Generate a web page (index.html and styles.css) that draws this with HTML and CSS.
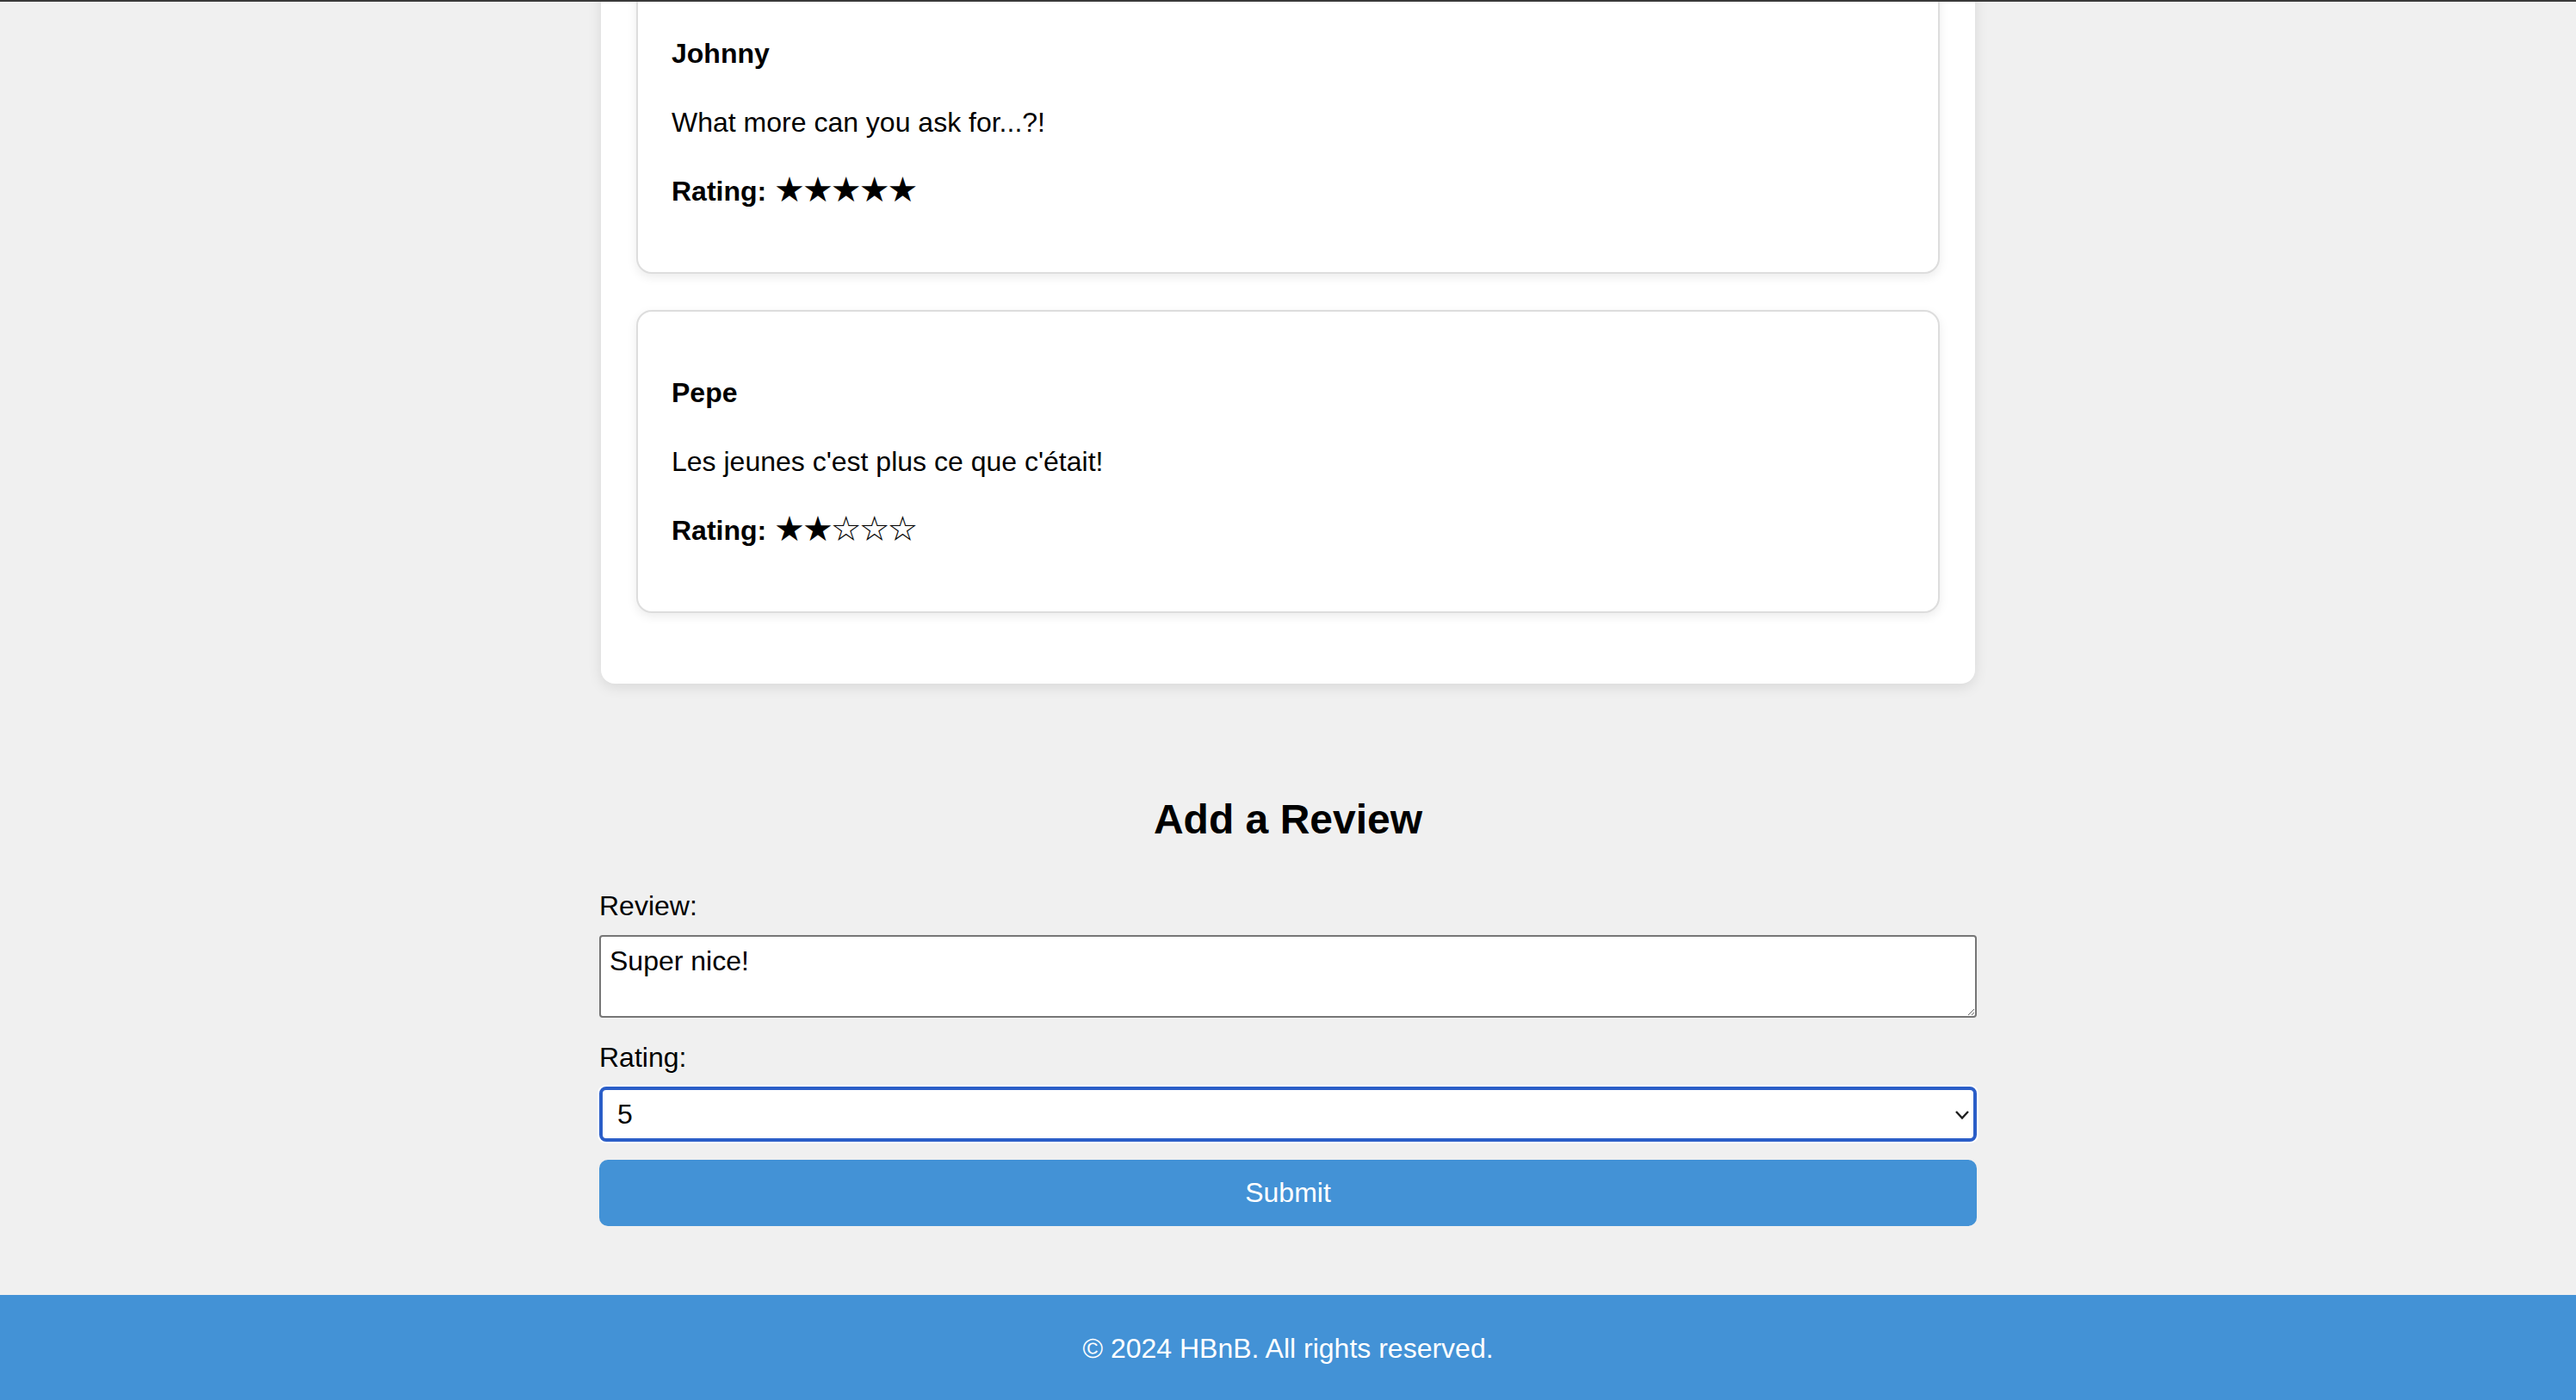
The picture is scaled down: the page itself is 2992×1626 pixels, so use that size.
FILE: index.html
```html
<!DOCTYPE html>
<html lang="en">
<head>
<meta charset="utf-8">
<title>HBnB - Place Details</title>
<link rel="stylesheet" href="styles.css">
</head>
<body>
<div class="window-edge"></div>
<main class="page">
  <section class="reviews">
    <article class="review-card">
      <p class="review-name">Johnny</p>
      <p class="review-text">What more can you ask for...?!</p>
      <p class="review-rating"><strong>Rating:</strong> <span class="stars">★★★★★</span></p>
    </article>
    <article class="review-card">
      <p class="review-name">Pepe</p>
      <p class="review-text">Les jeunes c'est plus ce que c'était!</p>
      <p class="review-rating"><strong>Rating:</strong> <span class="stars">★★☆☆☆</span></p>
    </article>
  </section>

  <section class="add-review">
    <h2 class="add-review-title">Add a Review</h2>
    <form class="review-form">
      <label class="form-label" for="review-text">Review:</label>
      <textarea class="form-textarea" id="review-text" name="review">Super nice!</textarea>
      <label class="form-label" for="rating">Rating:</label>
      <div class="select-wrap">
        <select class="form-select" id="rating" name="rating">
          <option>1</option>
          <option>2</option>
          <option>3</option>
          <option>4</option>
          <option selected>5</option>
        </select>
        <svg class="select-chevron" width="16" height="10" viewBox="0 0 16 10" aria-hidden="true">
          <polyline points="1,1 8,8.5 15,1" fill="none" stroke="#1e1e1e" stroke-width="2.4"/>
        </svg>
      </div>
      <button class="submit-btn" type="button">Submit</button>
    </form>
  </section>
</main>
<footer class="site-footer">
  <p class="footer-text">© 2024 HBnB. All rights reserved.</p>
</footer>
</body>
</html>
```

FILE: styles.css
```css
* {
  box-sizing: border-box;
}

html, body {
  margin: 0;
  padding: 0;
}

body {
  background: #f0f0f0;
  color: #000;
  font-family: "Liberation Sans", Arial, Helvetica, sans-serif;
  font-size: 32px;
  line-height: 1.5;
}

.window-edge {
  position: fixed;
  top: 0;
  left: 0;
  right: 0;
  height: 2px;
  background: #3a3a3a;
  z-index: 10;
}

.page {
  display: flex;
  flex-direction: column;
  align-items: center;
}

.reviews {
  width: 1596px;
  margin-top: -74px;
  padding: 40px 41px 40px 41px;
  background: #fff;
  border-radius: 16px;
  box-shadow: 0 4px 16px rgba(0, 0, 0, 0.1);
}

.review-card {
  background: #fff;
  border: 2px solid #dddddd;
  border-radius: 18px;
  padding: 38px 39px;
  margin-bottom: 42px;
  box-shadow: 0 4px 12px rgba(0, 0, 0, 0.08);
}

.review-card p {
  margin: 32px 0;
}

.review-name {
  font-weight: bold;
}

.stars {
  font-family: "DejaVu Sans", sans-serif;
  font-size: 40px;
  line-height: 1;
  letter-spacing: -3px;
  vertical-align: -1px;
}

.add-review {
  width: 1600px;
  margin-top: 122px;
  margin-bottom: 80px;
}

.add-review-title {
  margin: 0 0 40px;
  font-size: 48px;
  line-height: 72px;
  font-weight: bold;
  text-align: center;
}

.review-form {
  display: flex;
  flex-direction: column;
}

.form-label {
  display: block;
  margin-bottom: 10px;
}

.form-textarea {
  display: block;
  width: 100%;
  height: 96px;
  margin: 0 0 22px;
  padding: 10px;
  border: 2px solid #767676;
  border-radius: 4px;
  background: #fff;
  font-family: "Liberation Sans", Arial, sans-serif;
  font-size: 32px;
  line-height: normal;
  color: #000;
  resize: vertical;
}

.select-wrap {
  position: relative;
  margin-bottom: 21px;
}

.form-select {
  display: block;
  width: 100%;
  height: 64px;
  padding: 0 40px 0 17px;
  border: 4px solid #2b5ec8;
  border-radius: 8px;
  box-shadow: 0 0 0 2px #fff;
  background: #fff;
  font-family: "Liberation Sans", Arial, sans-serif;
  font-size: 32px;
  color: #000;
  appearance: none;
  -webkit-appearance: none;
  outline: none;
}

.select-chevron {
  position: absolute;
  right: 9px;
  top: 28px;
  pointer-events: none;
}

.submit-btn {
  display: block;
  width: 100%;
  padding: 20px;
  border: none;
  border-radius: 10px;
  background: #4392d6;
  color: #fff;
  font-family: "Liberation Sans", Arial, sans-serif;
  font-size: 32px;
  line-height: normal;
  cursor: pointer;
}

.site-footer {
  background: #4392d6;
  color: #fff;
  text-align: center;
  padding: 40px 0 80px;
}

.footer-text {
  margin: 0;
  line-height: 44px;
}
```
